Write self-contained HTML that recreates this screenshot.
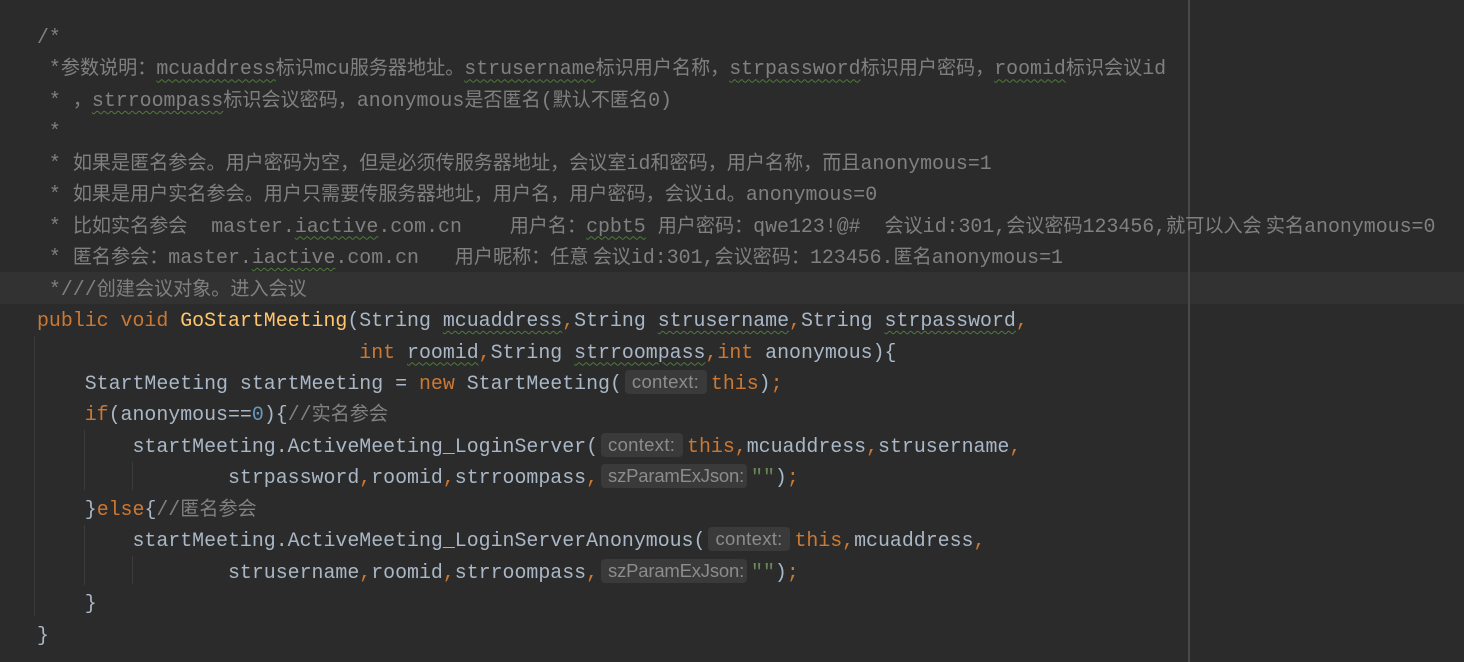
<!DOCTYPE html>
<html><head><meta charset="utf-8"><style>
html,body{margin:0;padding:0;background:#2b2b2b;width:1464px;height:662px;overflow:hidden;}
.hl{position:absolute;left:0;top:272px;width:1464px;height:32px;background:#323232;}
.margin{position:absolute;left:1188px;top:0;width:2px;height:662px;background:#484848;}
.guide{position:absolute;width:1px;background:#3b3b3b;}
pre{position:absolute;left:37px;top:22px;margin:0;font-family:"Liberation Mono",monospace;font-size:19.9px;line-height:31.45px;color:#a9b7c6;white-space:pre;}
.c{color:#808080;}
.k{color:#cc7832;}
.f{color:#ffc66d;}
.n{color:#6897bb;}
.s{color:#6a8759;}
.z{font-family:"Noto Sans CJK SC","WenQuanYi Zen Hei",sans-serif;font-size:19.1px;line-height:0;}
.w{text-decoration:underline wavy #4e7a3a;text-decoration-thickness:1px;text-underline-offset:4px;}
.h{display:inline-block;box-sizing:border-box;font-family:"Liberation Sans",sans-serif;font-size:18.5px;line-height:24px;color:#8c8c8c;background:#3a3a3a;border-radius:4px;padding:0 0 0 7px;margin:0 4px 0 3px;vertical-align:1px;letter-spacing:-0.2px;}
.h1{width:82px;letter-spacing:0.3px;}
.h2{width:146px;}
</style></head><body>
<div class="hl"></div>
<div class="margin"></div>
<div class="guide" style="left:34px;top:336px;height:280px"></div>
<div class="guide" style="left:84px;top:430px;height:60px"></div>
<div class="guide" style="left:84px;top:525px;height:60px"></div>
<div class="guide" style="left:132px;top:462px;height:28px"></div>
<div class="guide" style="left:132px;top:556px;height:28px"></div>
<pre><span class="c">/*
 *<span class="z">参数说明：</span><span class="w">mcuaddress</span><span class="z">标识</span>mcu<span class="z">服务器地址。</span><span class="w">strusername</span><span class="z">标识用户名称，</span><span class="w">strpassword</span><span class="z">标识用户密码，</span><span class="w">roomid</span><span class="z">标识会议</span>id
 * <span class="z">，</span><span class="w">strroompass</span><span class="z">标识会议密码，</span>anonymous<span class="z">是否匿名</span>(<span class="z">默认不匿名</span>0)
 *
 * <span class="z">如果是匿名参会。用户密码为空，但是必须传服务器地址，会议室</span>id<span class="z">和密码，用户名称，而且</span>anonymous=1
 * <span class="z">如果是用户实名参会。用户只需要传服务器地址，用户名，用户密码，会议</span>id<span class="z">。</span>anonymous=0
 * <span class="z">比如实名参会</span>  master.<span class="w">iactive</span>.com.cn    <span class="z">用户名：</span><span class="w">cpbt5</span> <span class="z">用户密码：</span>qwe123!@#  <span class="z">会议</span>id:301,<span class="z">会议密码</span>123456,<span class="z">就可以入会 实名</span>anonymous=0
 * <span class="z">匿名参会：</span>master.<span class="w">iactive</span>.com.cn   <span class="z">用户昵称：任意 会议</span>id:301,<span class="z">会议密码：</span>123456.<span class="z">匿名</span>anonymous=1
 *///<span class="z">创建会议对象。进入会议</span></span>
<span class="k">public void </span><span class="f">GoStartMeeting</span>(String <span class="w">mcuaddress</span><span class="k">,</span>String <span class="w">strusername</span><span class="k">,</span>String <span class="w">strpassword</span><span class="k">,</span>
                           <span class="k">int </span><span class="w">roomid</span><span class="k">,</span>String <span class="w">strroompass</span><span class="k">,int </span>anonymous){
    StartMeeting startMeeting = <span class="k">new </span>StartMeeting(<span class="h h1">context:</span><span class="k">this</span>)<span class="k">;</span>
    <span class="k">if</span>(anonymous==<span class="n">0</span>){<span class="c">//<span class="z">实名参会</span></span>
        startMeeting.ActiveMeeting_LoginServer(<span class="h h1">context:</span><span class="k">this,</span>mcuaddress<span class="k">,</span>strusername<span class="k">,</span>
                strpassword<span class="k">,</span>roomid<span class="k">,</span>strroompass<span class="k">,</span><span class="h h2">szParamExJson:</span><span class="s">""</span>)<span class="k">;</span>
    }<span class="k">else</span>{<span class="c">//<span class="z">匿名参会</span></span>
        startMeeting.ActiveMeeting_LoginServerAnonymous(<span class="h h1">context:</span><span class="k">this,</span>mcuaddress<span class="k">,</span>
                strusername<span class="k">,</span>roomid<span class="k">,</span>strroompass<span class="k">,</span><span class="h h2">szParamExJson:</span><span class="s">""</span>)<span class="k">;</span>
    }
}</pre>
</body></html>
